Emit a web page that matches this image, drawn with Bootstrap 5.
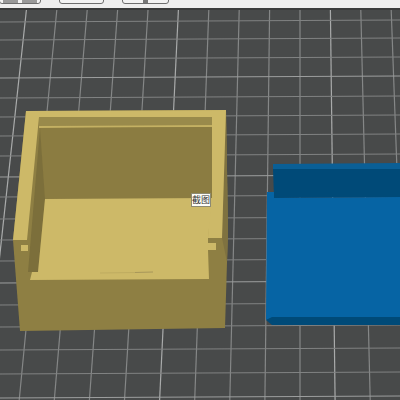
<!DOCTYPE html>
<html lang="en">
<head>
  <meta charset="UTF-8">
  <title>截图</title>
  <link href="https://cdn.jsdelivr.net/npm/bootstrap@5.3.3/dist/css/bootstrap.min.css" rel="stylesheet">
  <style>
    body {
      width: 400px;
      height: 400px;
      overflow: hidden;
      background-color: #484a4a;
    }
    .top-strip {
      height: 10px;
      background-color: #eeeeee;
      border-bottom: 2px solid #3a3b3b;
      overflow: hidden;
    }
    .tool-btn {
      height: 20px;
      margin-top: -16px;
      background-color: #f3f3f3;
      border: 1px solid #6e6e6e;
      border-radius: 3px;
    }
    .tool-a { width: 42px; margin-left: -1px; margin-right: 18px; padding: 13px 3px 0; }
    .tool-b { width: 45px; margin-right: 18px; }
    .tool-c { width: 47px; padding-top: 14px; }
    .tool-a span { width: 16px; height: 5px; background-color: #9a9a9a; }
    .tool-c span { width: 5px; height: 4px; background-color: #777777; }
    .plate {
      height: 390px;
      position: relative;
    }
    .plate svg {
      display: block;
      filter: blur(0.45px);
    }
    .snip-tag {
      position: absolute;
      left: 191px;
      top: 183px;
      width: 20px;
      height: 14px;
      background-color: #fdfdf8;
      border: 1px solid #8d8a72;
      color: #333333;
      font: 9px/12px "Noto Sans CJK SC", "Liberation Sans", sans-serif;
      text-align: center;
      white-space: nowrap;
    }
  </style>
</head>
<body>
  <div class="top-strip d-flex align-items-start">
    <div class="tool-btn tool-a d-flex gap-1"><span></span><span></span></div>
    <div class="tool-btn tool-b"></div>
    <div class="tool-btn tool-c d-flex justify-content-center"><span></span></div>
  </div>

  <div class="plate">
    <svg width="400" height="390" viewBox="0 10 400 390" xmlns="http://www.w3.org/2000/svg">
      <g id="gridLines"></g>

      <!-- yellow box -->
      <polygon fill="#8e7f43" points="26,111 226,110 228,230 225,328 20,331 13,240"/>
      <polygon fill="#7f7240" points="222,238 226,110 228,230 227,262"/>
      <polygon fill="#cdb968" points="26,111 226,110 222,238 208,238 212,117 39,117 27,240 13,240"/>
      <polygon fill="#998a4b" points="39,117 212,117 212,125 39,126"/>
      <polygon fill="#c4b163" points="39,126 212,125 212,127 39,128"/>
      <polygon fill="#8b7c41" points="40,128 212,127 212,198 45,199"/>
      <polygon fill="#7c6f3b" points="40,128 45,199 38,272 28,272"/>
      <polygon fill="#cdb968" points="45,199 212,198 208,238 208,243 216,243 216,250 208,250 209,279 30,280 32,272 38,272"/>
      <polygon fill="#cdb968" points="21,245 28,245 28,251 21,251"/>
      <polyline fill="none" stroke="#bfac60" stroke-width="1" points="100,273 135,272.5"/>
      <polyline fill="none" stroke="#a8975a" stroke-width="1" points="135,272.5 153,272"/>

      <!-- blue box -->
      <polygon fill="#0a5f96" points="273,164 400,163 400,170 273,170"/>
      <polygon fill="#004a78" points="273,169 400,169 400,197 274,198"/>
      <polygon fill="#0664a4" points="267,192 274,192 274,198 400,197 400,317 272,318 266,320"/>
      <polygon fill="#004a78" points="266,320 272,317 400,317 400,325 272,325"/>
    </svg>
    <div class="snip-tag">截图</div>
  </div>

  <script src="https://cdn.jsdelivr.net/npm/bootstrap@5.3.3/dist/js/bootstrap.bundle.min.js"></script>
  <script>
    // perspective grid: verticals spread out towards the bottom, x=300 stays straight
    const NS = "http://www.w3.org/2000/svg";
    const gridLines = document.getElementById("gridLines");
    function addLine(x1, y1, x2, y2, color) {
      const line = document.createElementNS(NS, "line");
      line.setAttribute("x1", x1);
      line.setAttribute("y1", y1);
      line.setAttribute("x2", x2);
      line.setAttribute("y2", y2);
      line.setAttribute("stroke", color);
      line.setAttribute("stroke-width", "1.2");
      gridLines.appendChild(line);
    }
    for (let k = -10; k <= 3; k++) {
      const bright = (k + 4) % 5 === 0;
      addLine(300 + k * 30.4, 10, 300 + k * 35.1, 400, bright ? "#a9abab" : "#858787");
    }
    const rows = [20, 38, 57, 76, 96, 115, 134, 154, 175, 195, 217, 238, 259, 281, 303, 325, 348, 372, 396];
    rows.forEach(function (y, i) {
      const bright = i % 5 === 3;
      addLine(0, y + 2, 400, y, bright ? "#9c9e9e" : "#808282");
    });
  </script>
</body>
</html>
